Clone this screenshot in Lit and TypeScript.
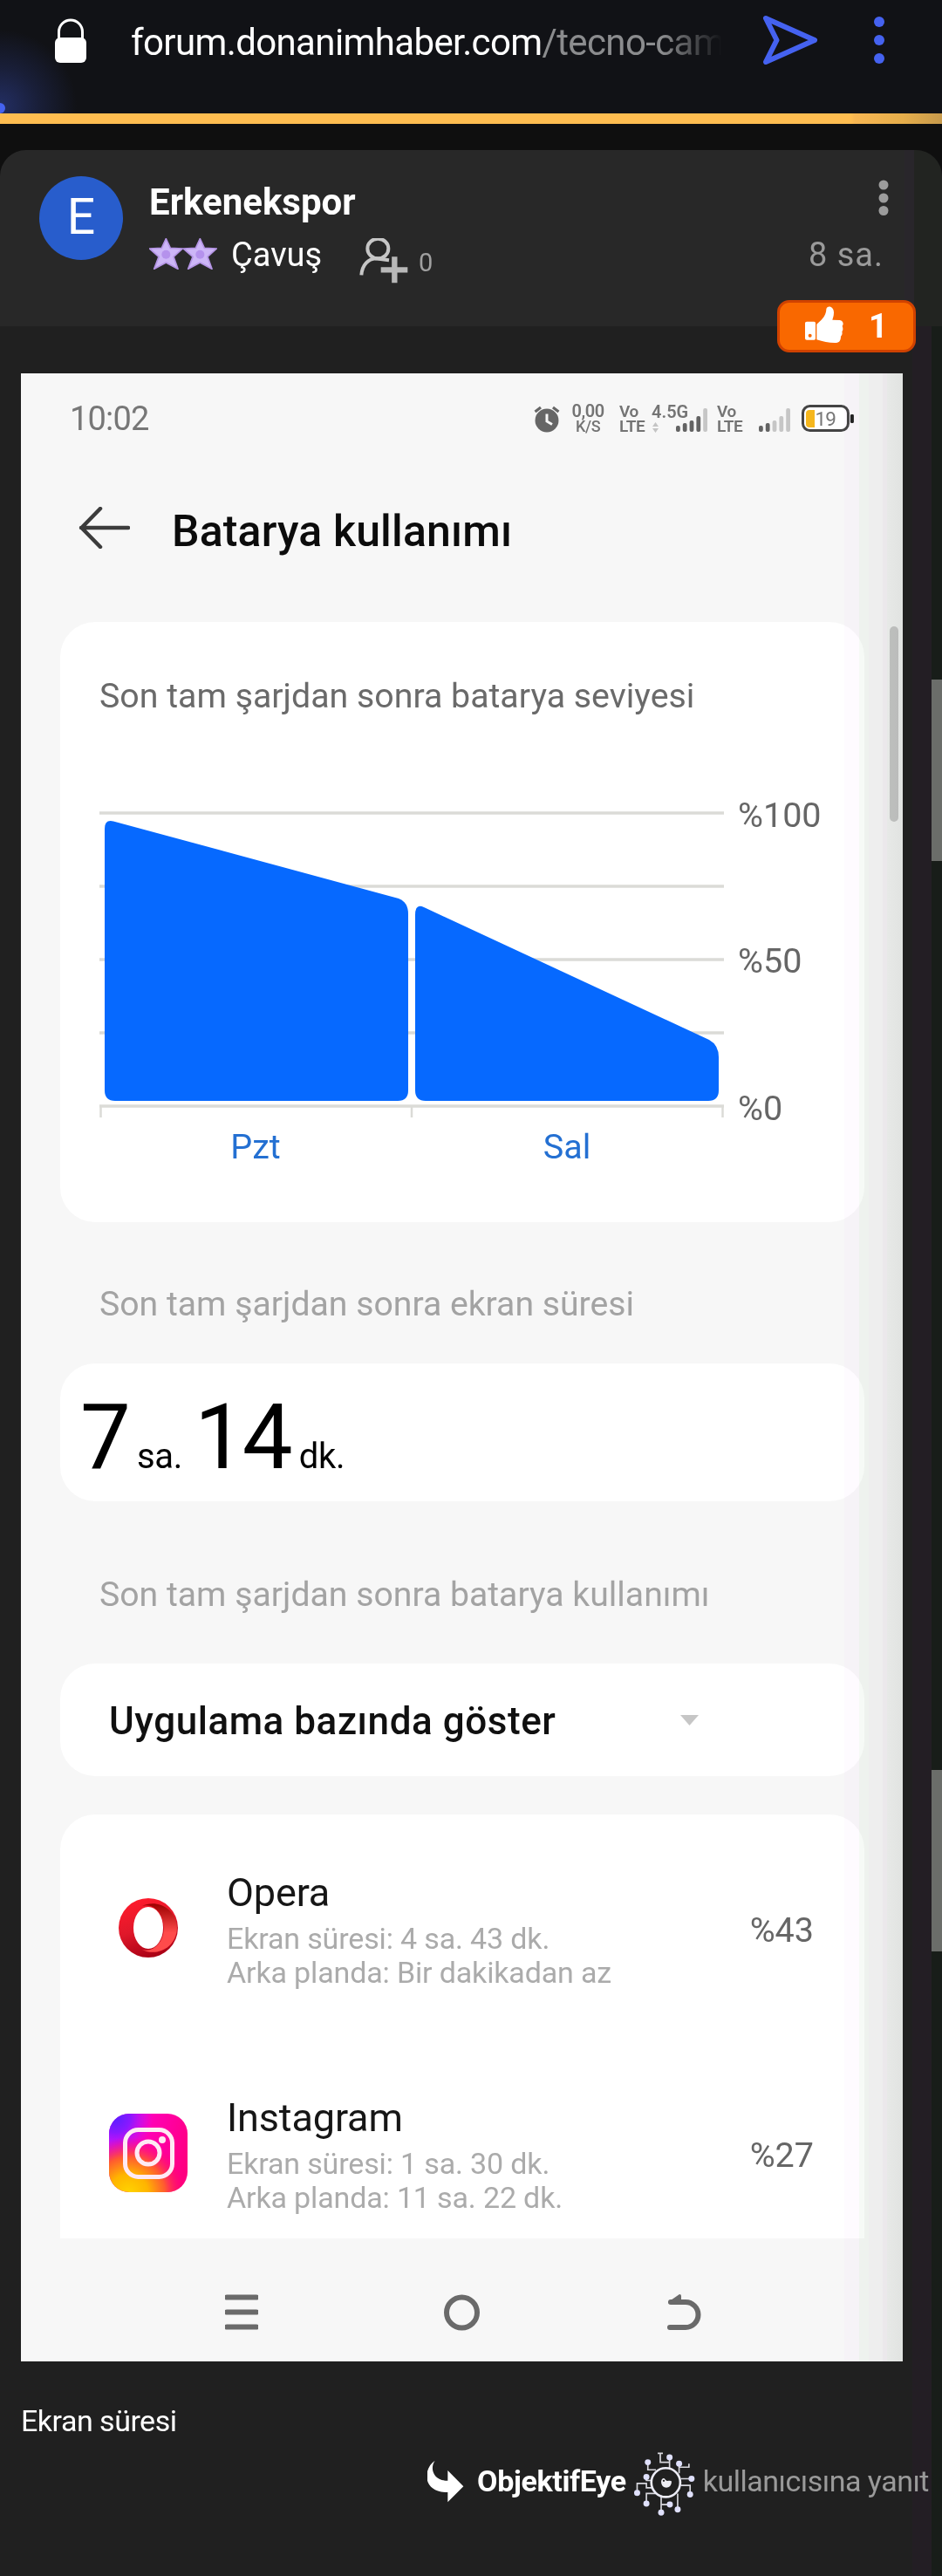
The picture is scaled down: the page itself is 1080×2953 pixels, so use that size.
import { LitElement, html, css, svg } from 'lit';
import { customElement, property } from 'lit/decorators.js';

const opera = svg`
  <svg width="68" height="68" viewBox="0 0 68 68">
    <defs>
      <linearGradient id="ring" x1="0.3" y1="0" x2="0.6" y2="1">
        <stop offset="0" stop-color="#ff1b2d" />
        <stop offset="0.5" stop-color="#e0182a" />
        <stop offset="1" stop-color="#a70014" />
      </linearGradient>
      <linearGradient id="fold" x1="0" y1="0" x2="0" y2="1">
        <stop offset="0" stop-color="#9c0000" />
        <stop offset="0.6" stop-color="#ff4b4b" />
        <stop offset="1" stop-color="#ff4b4b" />
      </linearGradient>
    </defs>
    <circle cx="34" cy="34" r="34" fill="url(#ring)" />
    <path d="M27 9C42 1 66 10 67 34C66 58 43 67 27 59C40 63 52 50 52 34S40 5 27 9Z" fill="url(#fold)" />
    <ellipse cx="34" cy="34" rx="17" ry="24" fill="#fff" />
  </svg>`;

const instagram = svg`
  <svg width="90" height="90" viewBox="0 0 90 90">
    <defs>
      <linearGradient id="pink" x1="0" y1="0.3" x2="1" y2="0.6">
        <stop offset="0" stop-color="#d412f5" />
        <stop offset="0.45" stop-color="#ff00b4" />
        <stop offset="1" stop-color="#ff0080" />
      </linearGradient>
      <radialGradient id="violet" cx="0.08" cy="0.05" r="0.48">
        <stop offset="0" stop-color="#5a20ff" />
        <stop offset="0.4" stop-color="#8a18ff" />
        <stop offset="1" stop-color="#d010ff" stop-opacity="0" />
      </radialGradient>
      <radialGradient id="sun" cx="0.25" cy="1.02" r="0.72">
        <stop offset="0" stop-color="#ffd600" />
        <stop offset="0.35" stop-color="#ffb400" />
        <stop offset="0.65" stop-color="#ff5a30" />
        <stop offset="1" stop-color="#ff0069" stop-opacity="0" />
      </radialGradient>
    </defs>
    <rect width="90" height="90" rx="23" fill="url(#pink)" />
    <rect width="90" height="90" rx="23" fill="url(#violet)" />
    <rect width="90" height="90" rx="23" fill="url(#sun)" />
    <g fill="none" stroke="#ffeaf4" stroke-width="5">
      <rect x="18.5" y="18.5" width="54" height="54" rx="15" />
      <circle cx="45" cy="45" r="13" />
    </g>
    <circle cx="61" cy="30" r="4" fill="#ffeaf4" />
  </svg>`;

const apps = [
  { name: 'Opera', icon: opera, screen: 'Ekran süresi: 4 sa. 43 dk.', background: 'Arka planda: Bir dakikadan az', share: '%43' },
  { name: 'Instagram', icon: instagram, screen: 'Ekran süresi: 1 sa. 30 dk.', background: 'Arka planda: 11 sa. 22 dk.', share: '%27' },
];

@customElement('browser-bar')
export class BrowserBar extends LitElement {
  static styles = css`
    :host {
      display: flex;
      align-items: center;
      box-sizing: border-box;
      height: 130px;
      padding: 0 66px 34px 63px;
      background: radial-gradient(circle 88px at 0 122px, #232e63, rgba(35, 46, 99, .45) 50%, transparent), #111216;
      position: relative;
    }

    .lock {
      margin-top: -5px;
    }

    .url {
      flex: none;
      width: 677px;
      margin: 1px 0 0 51px;
      overflow: hidden;
      white-space: nowrap;
      font-size: 42px;
      line-height: 56px;
      letter-spacing: -.62px;
      color: #fff;
      mask-image: linear-gradient(90deg, #000 610px, transparent 678px);
    }

    .path {
      color: #8b8c8e;
    }

    .send {
      margin: -4px 0 0 47px;
    }

    .more {
      margin: -4px 0 0 auto;
    }

    .dot {
      position: absolute;
      left: -6px;
      bottom: 0;
      width: 12px;
      height: 12px;
      border-radius: 50%;
      background: #4562f0;
    }
  `;

  render() {
    return html`
      <svg class="lock" width="36" height="52" viewBox="0 0 36 52">
        <path d="M4.500 26V16.500a13.500 13.500 0 0 1 27 0V26" fill="none" stroke="#fff" stroke-width="3" />
        <rect y="23" width="36" height="29" rx="6" fill="#fff" />
      </svg>
      <div class="url">forum.donanimhaber.com<span class="path">/tecno-came</span></div>
      <svg class="send" width="64" height="58" viewBox="0 0 64 58">
        <path d="M4 4L60 29L4 54L16.500 29Z" fill="none" stroke="#4562f0" stroke-width="6" stroke-linejoin="round" />
      </svg>
      <svg class="more" width="12" height="54" viewBox="0 0 12 54" fill="#4562f0">
        <circle cx="6" cy="6" r="6" /><circle cx="6" cy="27" r="6" /><circle cx="6" cy="48" r="6" />
      </svg>
      <div class="dot"></div>
    `;
  }
}

@customElement('post-header')
export class PostHeader extends LitElement {
  static styles = css`
    :host {
      display: flex;
      box-sizing: border-box;
      height: 202px;
      padding: 30px 61px 0 45px;
      border-radius: 30px 30px 0 0;
      background: linear-gradient(90deg, #282828 1037px, #29262b 1037px 1048px, #222421 1048px);
      position: relative;
    }

    .avatar {
      width: 96px;
      height: 96px;
      border-radius: 50%;
      background: #285dcc;
      color: #fff;
      font-size: 57px;
      line-height: 93px;
      text-align: center;
    }

    .who {
      flex: 1;
      margin-left: 30px;
    }

    .name {
      margin-top: 4px;
      font-size: 42px;
      line-height: 52px;
      font-weight: 700;
      color: #fff;
    }

    .rank {
      display: flex;
      align-items: center;
      height: 60px;
      margin-top: 4px;
      font-size: 38px;
      color: #fff;
    }

    .stars {
      margin: -3px 16px 0 0;
    }

    .follow {
      margin: 13px 0 0 43px;
    }

    .count {
      margin: 17px 0 0 12px;
      font-size: 29px;
      color: #a0a0a0;
    }

    .meta {
      display: flex;
      flex-direction: column;
      align-items: flex-end;
      font-size: 38px;
      line-height: 60px;
      letter-spacing: 1px;
      color: #9a9a9a;
      padding: 4px 6px 0 0;
    }

    .meta svg {
      margin: 0 -6px 14px 0;
    }

    .badge {
      position: absolute;
      left: 891px;
      top: 172px;
      display: flex;
      align-items: center;
      box-sizing: border-box;
      width: 159px;
      height: 60px;
      padding-left: 29px;
      border: 3px solid #d04200;
      border-radius: 14px;
      background: #f96800;
      color: #fff;
      font-size: 38px;
      font-weight: 700;
    }

    .badge svg {
      margin: -4px 28px 0 0;
    }
  `;

  render() {
    return html`
      <div class="avatar">E</div>
      <div class="who">
        <div class="name">Erkenekspor</div>
        <div class="rank">
          <svg class="stars" width="78" height="36" viewBox="513 816 234 108">
            <g fill="#cdb6f7" stroke="#b494e4" stroke-width="5" stroke-linejoin="round">
              <path id="star" d="M571 818L586 850L628 852L597 880L612 922L571 900L530 922L546 880L514 852L556 850Z" />
              <use href="#star" x="117" />
            </g>
            <g fill="#b592ec"><circle cx="571" cy="872" r="15" /><circle cx="688" cy="872" r="15" /></g>
          </svg>
          Çavuş
          <svg class="follow" width="56" height="52" viewBox="1236 816 168 156" fill="none" stroke="#c6c6c6">
            <ellipse cx="1300" cy="852" rx="36" ry="34" stroke-width="12" />
            <path d="M1243 943C1246 905 1268 888 1292 886L1338 892" stroke-width="12" />
            <path d="M1310 925H1402M1357 880V970" stroke-width="19" stroke="#b8b8b8" />
          </svg>
          <span class="count">0</span>
        </div>
      </div>
      <div class="meta">
        <svg width="12" height="42" viewBox="0 0 12 42" fill="#9c9c9c">
          <circle cx="6" cy="6" r="5.500" /><circle cx="6" cy="21" r="5.500" /><circle cx="6" cy="35.500" r="5.500" />
        </svg>
        8 sa.
      </div>
      <div class="badge">
        <svg width="45" height="43" viewBox="369 1050 135 129" fill="#fff">
          <path fill-rule="evenodd" d="M375 1103H400Q405 1103 405 1108V1161Q405 1166 400 1166H375Q369 1166 369 1161V1108Q369 1103 375 1103ZM386 1145A6 6 0 1 0 386 1157A6 6 0 1 0 386 1145Z" />
          <path d="M409 1112L425 1097C438 1085 442 1070 442 1060C444 1046 468 1048 468 1072C468 1085 464 1092 463 1097L488 1098C500 1099 503 1112 497 1118C500 1125 500 1133 496 1137C498 1146 496 1150 492 1154C492 1166 488 1175 476 1176C455 1177 432 1172 409 1165Z" />
        </svg>
        1
      </div>
    `;
  }
}

@customElement('signal-bars')
export class SignalBars extends LitElement {
  static styles = css`
    :host {
      display: block;
      height: 27px;
    }

    svg {
      display: block;
    }
  `;

  @property({ type: Number }) level = 0;

  render() {
    const heights = [7, 10, 13, 18, 27];
    return html`
      <svg width="36" height="27" viewBox="0 0 36 27">
        ${heights.map((h, i) => svg`
          <rect x=${i * 7.8} y=${27 - h} width="4.800" height=${h} rx="2" fill=${i < this.level ? '#636363' : '#c6c6c6'} />
        `)}
      </svg>
    `;
  }
}

@customElement('level-chart')
export class LevelChart extends LitElement {
  static styles = css`
    :host {
      display: block;
    }

    svg {
      display: block;
    }

    text {
      font-family: Roboto, sans-serif;
      font-size: 39.500px;
      fill: #666;
    }

    .day {
      fill: #2470d2;
      text-anchor: middle;
    }
  `;

  render() {
    return html`
      <svg width="840" height="450" viewBox="114 900 840 450">
        <g stroke="#dbdbd7" stroke-width="3.500">
          ${[932, 1016, 1100, 1184, 1268].map((y) => svg`<path d="M114 ${y}H830" />`)}
        </g>
        <path d="M115.500 1268V1281M472 1268V1281M828.500 1268V1281" stroke="#dbdbd7" stroke-width="2.500" />
        <g fill="#0669ff">
          <path d="M120 950Q120 939 130 941.500L457 1030Q468 1034 468 1048V1250Q468 1262 456 1262H132Q120 1262 120 1250Z" />
          <path d="M476 1049Q476 1035 486 1040L813 1192Q824 1198 824 1212V1250Q824 1262 812 1262H488Q476 1262 476 1250Z" />
        </g>
        <text x="846" y="948">%100</text>
        <text x="846" y="1115">%50</text>
        <text x="846" y="1284">%0</text>
        <text class="day" x="293" y="1328">Pzt</text>
        <text class="day" x="650" y="1328">Sal</text>
      </svg>
    `;
  }
}

@customElement('battery-screen')
export class BatteryScreen extends LitElement {
  static styles = css`
    :host {
      display: block;
      width: 1011px;
      height: 2279px;
      background: #f7f7f7;
      overflow: hidden;
      position: relative;
    }

    /* curved glass shade along the right side */
    :host::after {
      content: '';
      position: absolute;
      inset: 0;
      mix-blend-mode: multiply;
      background: linear-gradient(90deg, #fff 944px, #fefbff 944px 961px, #f6faf6 961px 972px, #f6f6f6 972px 988px, #f3f0f3 988px 993px, #eff1ef 993px, #e9ebe9);
    }

    .status {
      display: flex;
      align-items: center;
      height: 60px;
      margin: 22px 56px 0 56px;
      font-size: 38px;
      color: #777;
    }

    .time {
      width: 533px;
      letter-spacing: -.8px;
    }

    .stack {
      display: flex;
      flex-direction: column;
      font-size: 19px;
      line-height: 17px;
      font-weight: 600;
      letter-spacing: -.4px;
      color: #747474;
      margin-top: -1px;
    }

    .speed {
      width: 38px;
      margin-left: 13px;
      align-items: center;
    }

    .speed .first-line {
      font-size: 20px;
    }

    .speed .unit {
      font-size: 18px;
      font-weight: 500;
    }

    .lte {
      width: 28px;
      margin-left: 17px;
    }

    .net {
      width: 41px;
      margin-left: 9px;
      font-size: 20px;
      letter-spacing: 0;
    }

    .net svg {
      margin: 3px 0 0 1px;
    }

    .first {
      margin: 3px 0 0 -13px;
    }

    .second {
      margin: 3px 13px 0 20px;
    }

    .near {
      margin-left: 11px;
    }

    .heading {
      display: flex;
      align-items: center;
      height: 80px;
      margin: 59px 0 64px 66px;
      font-size: 50px;
      font-weight: 500;
      letter-spacing: .15px;
      color: #0c0c0c;
    }

    .heading svg {
      margin: -8px 48px 0 0;
    }

    .card {
      box-sizing: border-box;
      width: 922px;
      margin-left: 45px;
      border-radius: 40px;
      background: #fff;
    }

    .level {
      height: 688px;
      padding: 60px 0 0 45px;
    }

    .caption {
      margin-bottom: 77px;
      font-size: 39.300px;
      line-height: 50px;
      color: #6a6a6a;
    }

    .section {
      margin: 69px 0 43px 90px;
      font-size: 39.200px;
      line-height: 50px;
      color: #a3a3a3;
    }

    .section.usage {
      margin: 82px 0 54px 90px;
    }

    .total {
      display: flex;
      align-items: baseline;
      height: 158px;
      padding-left: 23px;
      font-size: 103px;
      line-height: 170px;
      letter-spacing: -3px;
      color: #000;
    }

    .unit-text {
      margin: 0 14px 0 10px;
      font-size: 40px;
      letter-spacing: -.3px;
    }

    .filter {
      display: flex;
      align-items: center;
      height: 129px;
      padding: 3px 190px 0 56px;
      justify-content: space-between;
      font-size: 44px;
      font-weight: 500;
      letter-spacing: .55px;
      color: #101010;
    }

    .filter svg {
      margin-top: -2px;
    }

    .apps {
      height: 486px;
      margin-top: 44px;
      padding-top: 3px;
      border-radius: 40px 40px 0 0;
      overflow: hidden;
    }

    .app {
      display: flex;
      align-items: center;
      height: 258px;
      padding: 0 58px 0 56px;
    }

    .icon {
      display: flex;
      justify-content: center;
      width: 90px;
      margin: -5px 45px 0 0;
    }

    .info {
      flex: 1;
      font-size: 34px;
      line-height: 39px;
      letter-spacing: -.15px;
      color: #ababab;
    }

    .app-name {
      margin-bottom: 7px;
      font-size: 45px;
      line-height: 52px;
      color: #161616;
    }

    .share {
      font-size: 39.500px;
      color: #666;
    }

    .nav {
      display: flex;
      align-items: center;
      box-sizing: border-box;
      height: 141px;
      gap: 213px;
      padding: 29px 0 0 234px;
    }

    .thumb {
      position: absolute;
      left: 996px;
      top: 290px;
      width: 10px;
      height: 224px;
      border-radius: 5px;
      background: #cbcbcb;
    }
  `;

  render() {
    return html`
      <div class="status">
        <span class="time">10:02</span>
        <svg width="30" height="31" viewBox="0 0 30 31">
          <circle cx="15" cy="17" r="13.500" fill="#666" />
          <path d="M1.500 7L8 2M28.500 7L22 2" stroke="#666" stroke-width="3.200" />
          <path d="M15 9.500V18L21 21.500" fill="none" stroke="#f7f7f7" stroke-width="3" />
        </svg>
        <div class="stack speed"><span class="first-line">0,00</span><span class="unit">K/S</span></div>
        <div class="stack lte"><span>Vo</span><span>LTE</span></div>
        <div class="stack net">
          <span>4.5G</span>
          <svg width="7" height="12" viewBox="0 0 7 12" fill="#c4c4c4"><path d="M0 5L3.500 0L7 5ZM0 7L3.500 12L7 7Z" /></svg>
        </div>
        <signal-bars class="first" level="4"></signal-bars>
        <div class="stack lte near"><span>Vo</span><span>LTE</span></div>
        <signal-bars class="second" level="2"></signal-bars>
        <svg width="60" height="32" viewBox="0 0 60 32">
          <rect x="1.500" y="1.500" width="52" height="28" rx="8" fill="#fff" stroke="#444" stroke-width="3" />
          <path d="M9 6H15V26H9Q5 26 5 22V10Q5 6 9 6Z" fill="#f5b61c" />
          <rect x="56" y="11" width="4" height="10" rx="1.500" fill="#222" />
          <text x="15.500" y="24" font-family="Roboto, sans-serif" font-size="22.500" letter-spacing="-.8" fill="#777">19</text>
        </svg>
      </div>
      <div class="heading">
        <svg width="59" height="48" viewBox="0 0 59 48" fill="none" stroke="#3c3c3c" stroke-width="4.500">
          <path d="M25 2L3.500 24L25 46M3 24H57" stroke-linejoin="round" stroke-linecap="round" />
        </svg>
        Batarya kullanımı
      </div>
      <div class="card level">
        <div class="caption">Son tam şarjdan sonra batarya seviyesi</div>
        <level-chart></level-chart>
      </div>
      <div class="section">Son tam şarjdan sonra ekran süresi</div>
      <div class="card total">
        7<span class="unit-text">sa.</span>14<span class="unit-text">dk.</span>
      </div>
      <div class="section usage">Son tam şarjdan sonra batarya kullanımı</div>
      <div class="card filter">
        Uygulama bazında göster
        <svg width="21" height="12" viewBox="0 0 21 12"><path d="M0 0H21L10.500 12Z" fill="#c6c6c6" /></svg>
      </div>
      <div class="card apps">
        ${apps.map((app) => html`
          <div class="app">
            <div class="icon">${app.icon}</div>
            <div class="info">
              <div class="app-name">${app.name}</div>
              <div>${app.screen}</div>
              <div>${app.background}</div>
            </div>
            <div class="share">${app.share}</div>
          </div>
        `)}
      </div>
      <div class="nav">
        <svg width="38" height="42" viewBox="0 0 38 42" stroke="#6a6a6a" stroke-width="6">
          <path d="M2 3.500H36M2 20.500H36M2 37.500H36" stroke-linecap="round" />
        </svg>
        <svg width="41" height="42" viewBox="0 0 41 42" fill="none" stroke="#6a6a6a" stroke-width="6">
          <circle cx="20.500" cy="21" r="17.500" />
        </svg>
        <svg width="41" height="42" viewBox="-2 0 41 42">
          <path d="M4 9H21A14 14 0 0 1 21 38H3" fill="none" stroke="#6a6a6a" stroke-width="6" stroke-linecap="round" />
          <path d="M1 9L14 0Q16 0 16 2V11H2Z" fill="#6a6a6a" />
        </svg>
      </div>
      <div class="thumb"></div>
    `;
  }
}

@customElement('app-root')
export class AppRoot extends LitElement {
  static styles = css`
    :host {
      display: block;
      width: 1080px;
      height: 2953px;
      overflow: hidden;
      background: #0f0f0f;
      font-family: Roboto, sans-serif;
      position: relative;
    }

    .accent {
      height: 12px;
      margin-bottom: 30px;
      background: linear-gradient(90deg, #ffbd50 976px, #f7b652 980px, #e6ae4b 1035px, #c79a4c);
    }

    .body {
      box-sizing: border-box;
      height: 2579px;
      padding: 54px 0 0 24px;
      background: linear-gradient(90deg, #202020 1046px, #231e24 1046px 1068px, #181d19 1068px);
    }

    .text {
      margin: 48px 0 0;
      font-size: 34px;
      line-height: 40px;
      letter-spacing: -.5px;
      color: #fff;
    }

    .reply {
      display: flex;
      align-items: center;
      justify-content: flex-end;
      height: 98px;
      padding-right: 15px;
      font-size: 34px;
      letter-spacing: -.5px;
      color: #9a9a9a;
      white-space: nowrap;
    }

    .reply b {
      margin: 0 9px 0 15px;
      letter-spacing: -.35px;
      color: #fff;
    }

    .eye {
      margin: 6px 9px 0 0;
    }

    .handle {
      position: absolute;
      right: 0;
      top: 779px;
      width: 12px;
      height: 208px;
      background: #6b6d6a;
    }

    .handle.lower {
      top: 2029px;
    }
  `;

  render() {
    return html`
      <browser-bar></browser-bar>
      <div class="accent"></div>
      <post-header></post-header>
      <div class="body">
        <battery-screen></battery-screen>
        <p class="text">Ekran süresi</p>
        <div class="reply">
          <svg width="42" height="49" viewBox="90 86 126 147">
            <path d="M116 88C98 112 108 157 160 157V122L214 177L160 231V197C70 197 75 115 116 88Z" fill="#fff" />
          </svg>
          <b>ObjektifEye</b>
          <svg class="eye" width="70" height="73" viewBox="795 62 210 220">
            <g fill="none" stroke="#d8d8de" stroke-width="5">
              <path d="M842 97V123H870M917 80V117M876 66H894M885 66V97H917M950 102V135M984 102V114H950M837 148V160H855M805 203V170H837V185H855M993 154H956M988 208V177H956M837 240V205H870M888 270V212M918 243H888M945 260V205" />
              <circle cx="904" cy="167" r="50" stroke="#ececf6" stroke-width="8" />
            </g>
            <g fill="#dfe0fb">
              ${[[842, 97], [917, 80], [950, 102], [837, 148], [805, 203], [993, 154], [988, 208], [837, 240], [888, 271], [918, 243], [945, 260]].map(
                ([x, y]) => svg`<circle cx=${x} cy=${y} r="10.500" />`
              )}
            </g>
            <path d="M888 163C888 192 924 192 924 163C918 157 908 166 903 158C898 148 890 152 888 163Z" fill="#eeeef4" />
            <circle cx="897" cy="161" r="3.500" fill="#202020" />
          </svg>
          kullanıcısına yanıt
        </div>
      </div>
      <div class="handle"></div>
      <div class="handle lower"></div>
    `;
  }
}
